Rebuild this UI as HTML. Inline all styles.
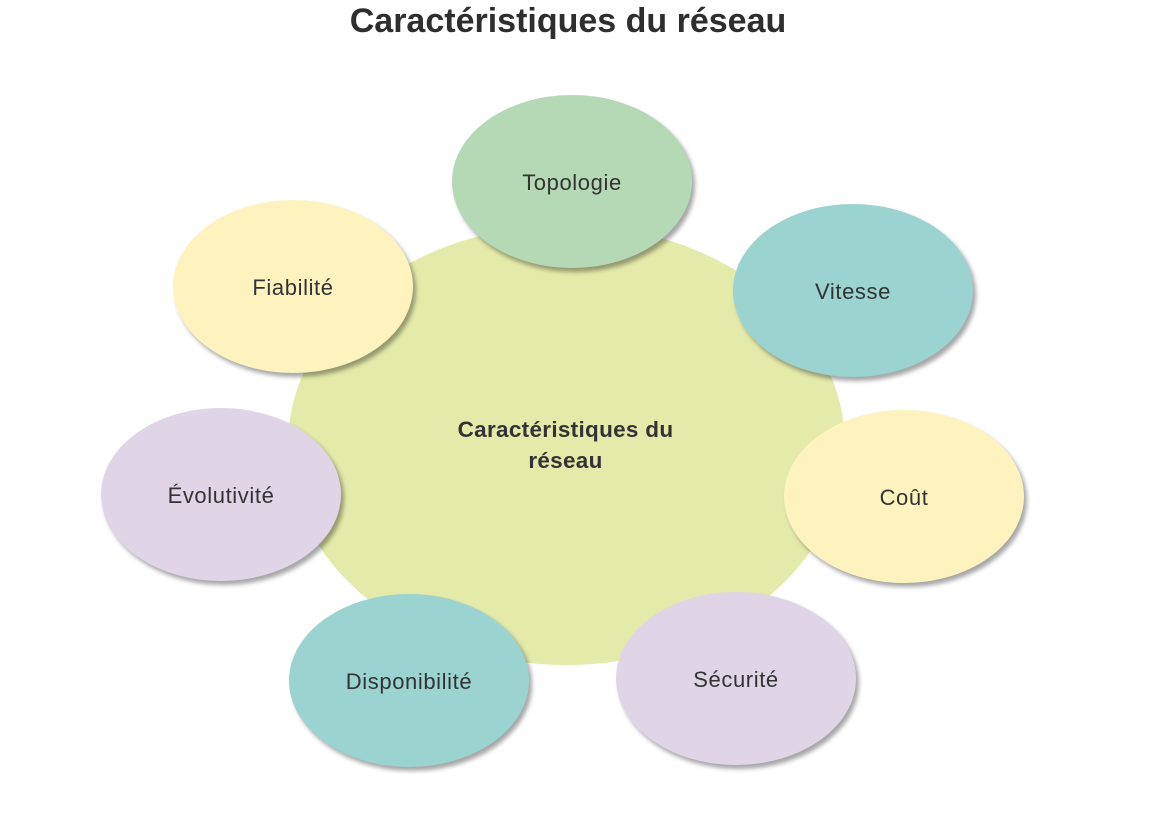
<!DOCTYPE html>
<html><head><meta charset="utf-8"><style>
html,body{margin:0;padding:0;background:#fff;}
body{width:1163px;height:821px;position:relative;overflow:hidden;font-family:"Liberation Sans",sans-serif;color:#333;}
h1{position:absolute;left:0;width:1136px;top:2px;margin:0;text-align:center;font-size:34px;font-weight:bold;color:#2e2e2e;}
.e{position:absolute;width:240px;height:173px;border-radius:50%;display:flex;align-items:center;justify-content:center;font-size:22px;letter-spacing:0.6px;box-shadow:3px 4px 4px rgba(0,0,0,0.35);}
.e span{position:relative;top:1px}
.big{position:absolute;left:288px;top:225px;width:557px;height:440px;border-radius:50%;background:#e4eaa9;display:flex;align-items:center;justify-content:center;text-align:center;font-weight:bold;font-size:22.5px;letter-spacing:0.3px;line-height:31px;}
.g{background:#b5d9b5}.t{background:#9ad3d0}.y{background:#fef3bf}.l{background:#dfd5e6}
</style></head><body>
<h1>Caractéristiques du réseau</h1>
<div class="big"><div style="margin-left:-2px;margin-top:0">Caractéristiques du<br>réseau</div></div>
<div class="e g" style="left:452px;top:95px"><span>Topologie</span></div>
<div class="e t" style="left:733px;top:204px"><span>Vitesse</span></div>
<div class="e y" style="left:173px;top:200px"><span>Fiabilité</span></div>
<div class="e l" style="left:101px;top:408px"><span>Évolutivité</span></div>
<div class="e y" style="left:784px;top:410px"><span>Coût</span></div>
<div class="e t" style="left:289px;top:594px"><span>Disponibilité</span></div>
<div class="e l" style="left:616px;top:592px"><span>Sécurité</span></div>
</body></html>
